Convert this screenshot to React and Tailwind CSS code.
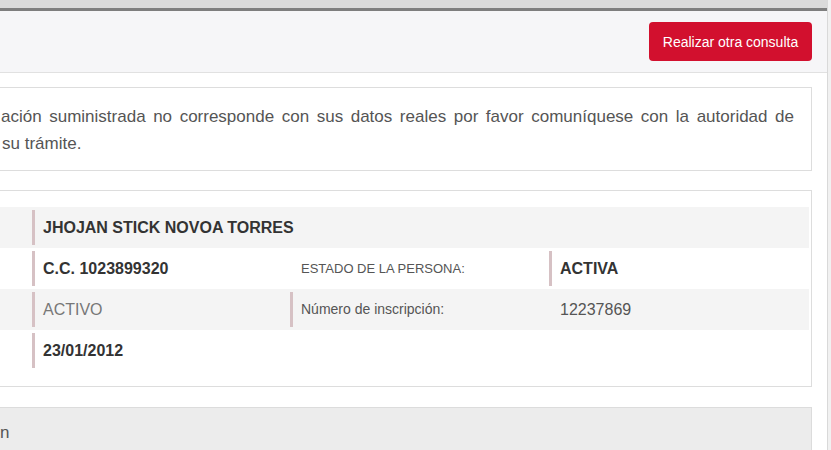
import React from "react";

function Cell({ bar = false, className = "", children }) {
  return (
    <div
      className={
        "flex items-center my-[3px] " +
        (bar ? "border-l-[3px] border-[#d6c1c4] pl-[8px] " : "pl-[11px] ") +
        className
      }
    >
      {children}
    </div>
  );
}

export default function App() {
  return (
    <div className="w-[831px] h-[450px] overflow-hidden flex bg-white font-['Liberation_Sans',Arial,sans-serif]">
      <div className="flex-1 flex flex-col min-w-0">
        <div className="h-[8px] bg-[#dadada] shrink-0" />
        <div className="h-[3px] bg-[#7e7e7e] shrink-0" />
        <div className="h-[62px] shrink-0 bg-[#f6f6f8] border-b border-[#e1e1e1] flex items-center justify-end pr-[15px]">
          <button className="h-[39px] w-[163px] rounded-[4px] bg-[#d2102e] text-white text-[14px] leading-none">
            Realizar otra consulta
          </button>
        </div>

        <div className="pr-[15px] flex flex-col">
          <div className="mt-[14px] border-y border-r border-[#dddddd] pt-[15px] pb-[13px] pr-[17px] text-[17px] leading-[27px] text-[#555555] overflow-hidden">
            <div className="pl-[1px] text-justify [text-align-last:justify]">
              ación suministrada no corresponde con sus datos reales por favor comuníquese con la autoridad de
            </div>
            <div className="pl-[2px] whitespace-nowrap">su trámite.</div>
          </div>

          <div className="mt-[19px] border-y border-r border-[#dddddd] pt-[16px] pb-[15px] pr-[2px]">
            <div className="grid grid-cols-[32px_258px_259px_1fr] h-[41px] bg-[#f4f4f4]">
              <div />
              <Cell bar className="col-span-3 text-[16px] font-bold text-[#333333]">
                JHOJAN STICK NOVOA TORRES
              </Cell>
            </div>
            <div className="grid grid-cols-[32px_258px_259px_1fr] h-[41px] bg-white">
              <div />
              <Cell bar className="text-[16px] font-bold text-[#333333]">C.C. 1023899320</Cell>
              <Cell className="text-[13px] text-[#555555]">ESTADO DE LA PERSONA:</Cell>
              <Cell bar className="text-[16px] font-bold text-[#333333]">ACTIVA</Cell>
            </div>
            <div className="grid grid-cols-[32px_258px_259px_1fr] h-[41px] bg-[#f4f4f4]">
              <div />
              <Cell bar className="text-[16px] text-[#777777]">ACTIVO</Cell>
              <Cell bar className="text-[14px] text-[#555555]">Número de inscripción:</Cell>
              <Cell className="text-[16px] text-[#555555]">12237869</Cell>
            </div>
            <div className="grid grid-cols-[32px_258px_259px_1fr] h-[41px] bg-white">
              <div />
              <Cell bar className="text-[16px] font-bold text-[#333333]">23/01/2012</Cell>
              <div />
              <div />
            </div>
          </div>

          <div className="mt-[20px] h-[60px] bg-[#ececec] border-t border-r border-[#dcdcdc] pt-[13px] text-[17px] leading-[24px] text-[#555555]">
            n
          </div>
        </div>
      </div>
      <div className="w-[4px] shrink-0 bg-[#f1f1f1] border-l border-[#d9d9d9]" />
    </div>
  );
}
